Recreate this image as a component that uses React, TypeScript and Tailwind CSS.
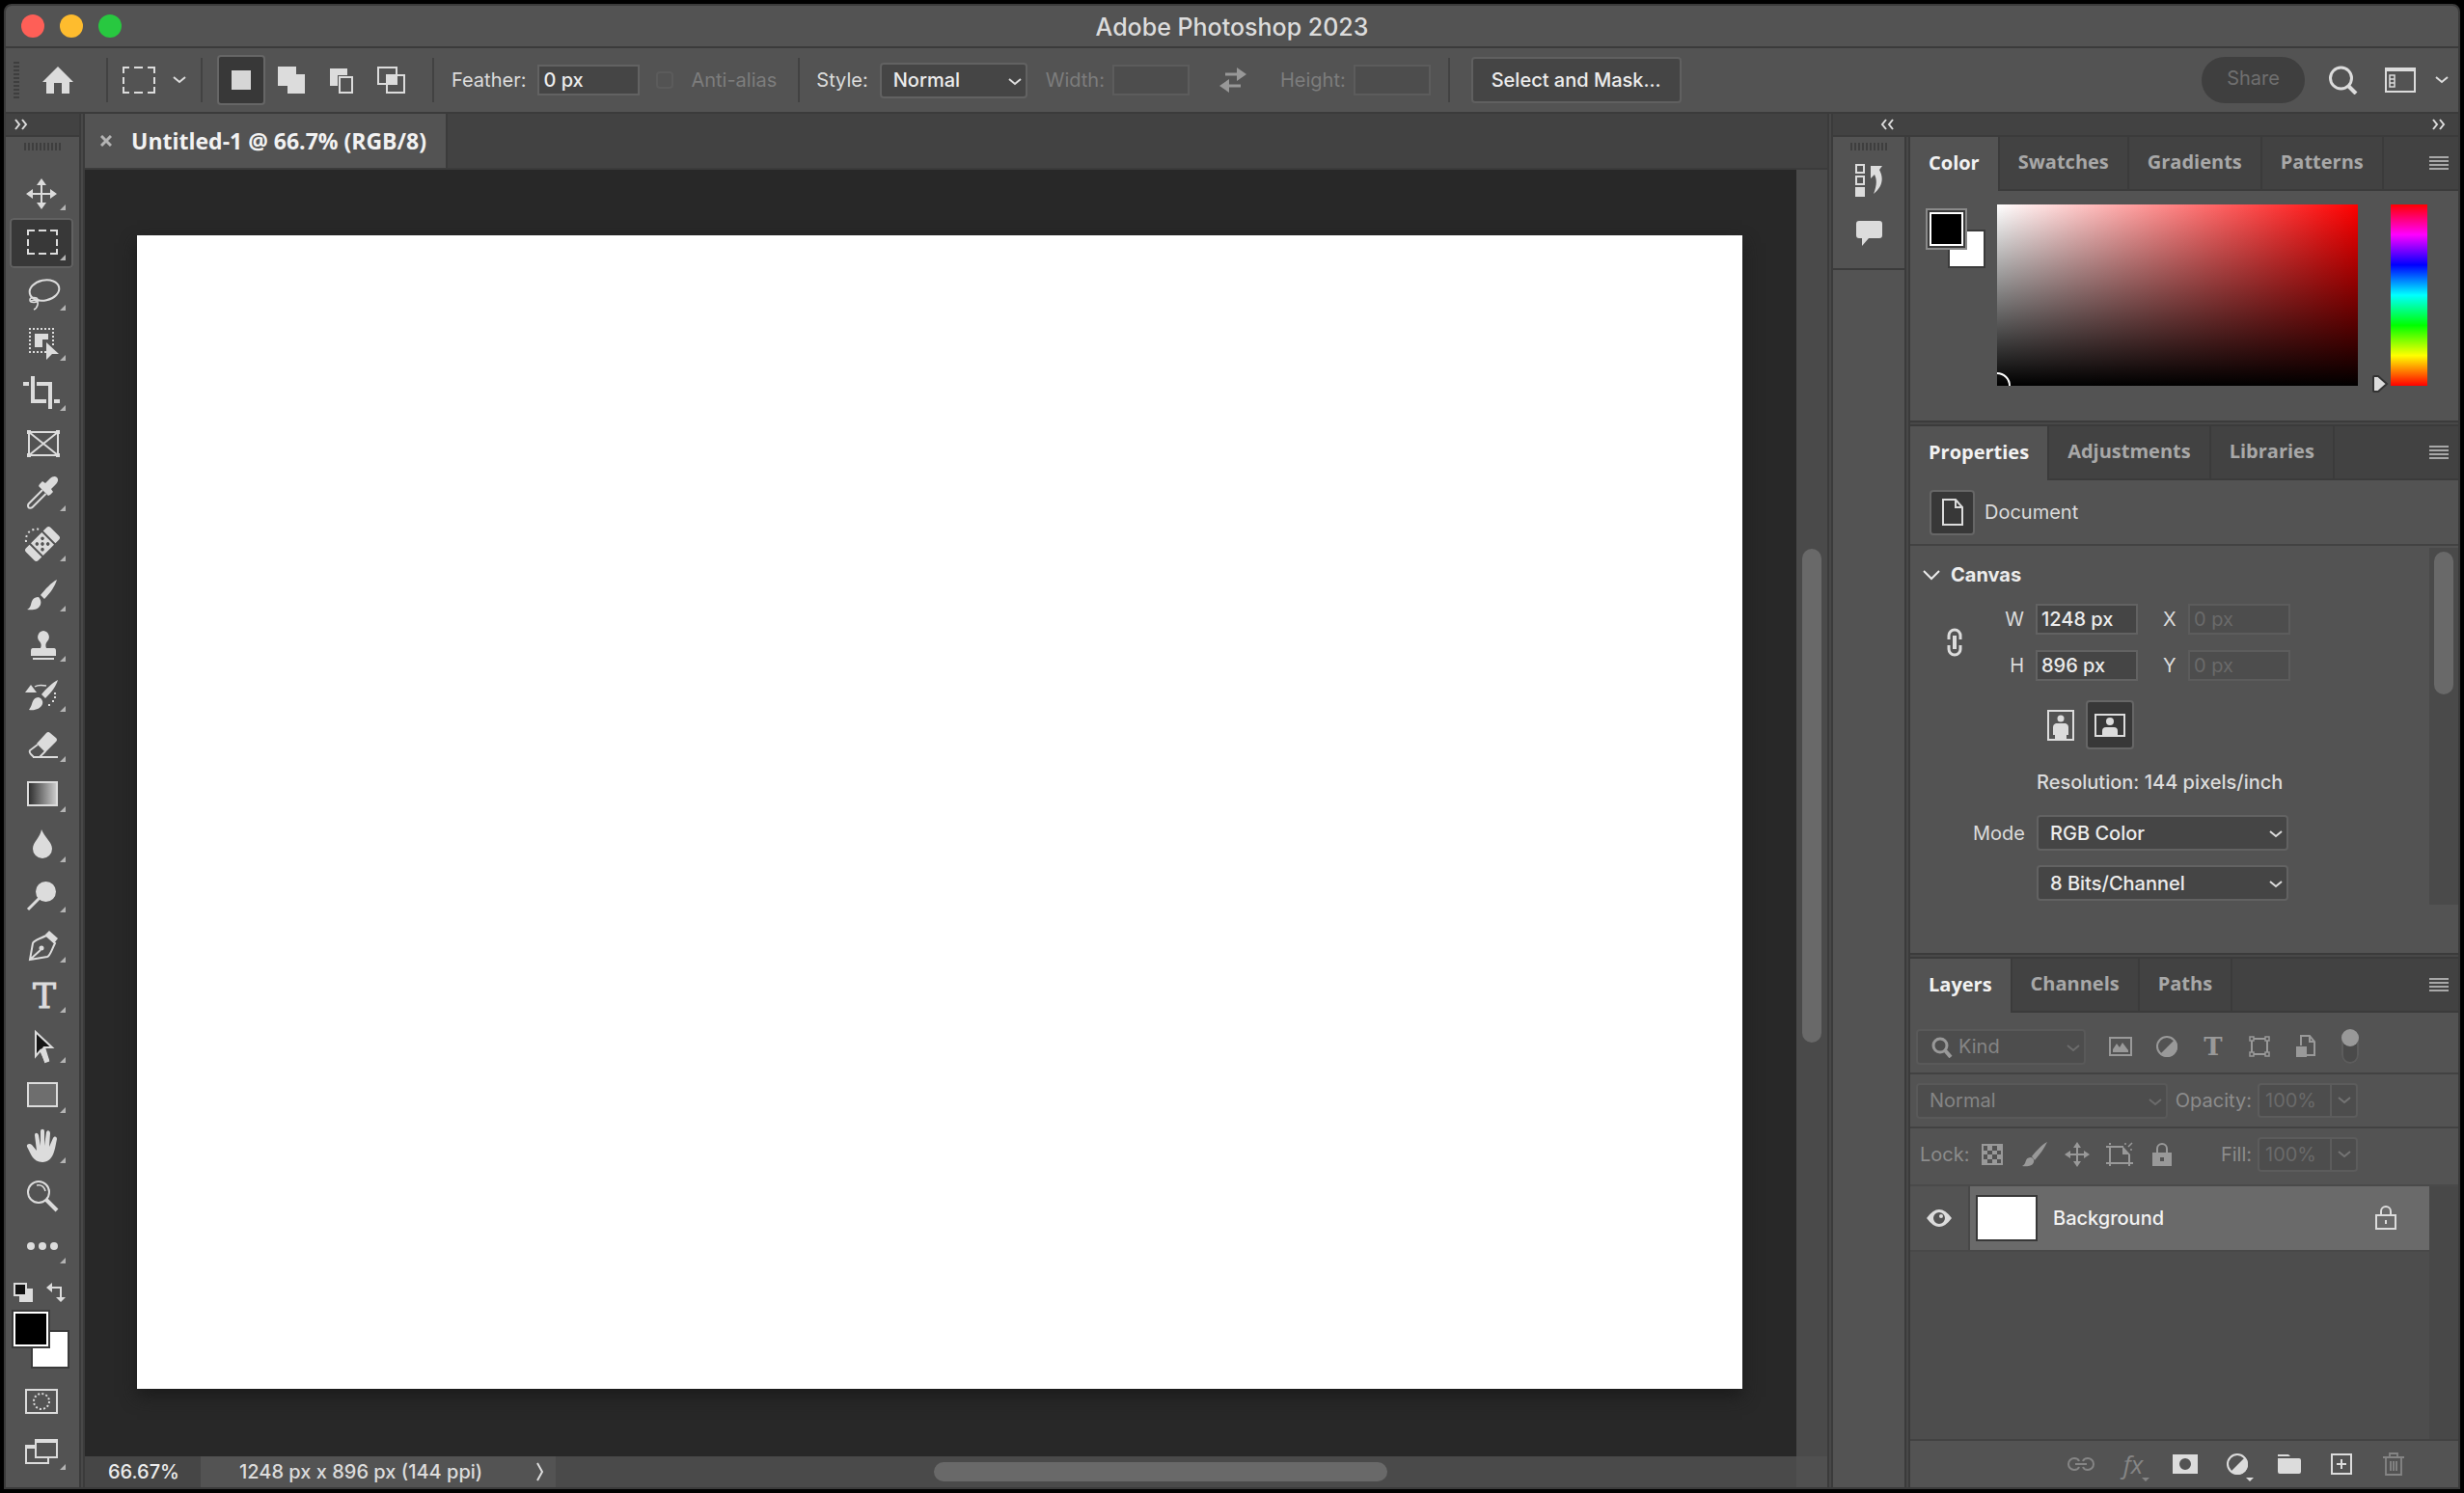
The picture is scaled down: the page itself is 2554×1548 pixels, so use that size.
import type { ReactNode } from "react";
import clsx from "clsx";

const Svg = ({ w, h, className, children }: { w: number; h: number; className?: string; children: ReactNode }) => (
  <svg
    width={w}
    height={h}
    viewBox={`0 0 ${w} ${h}`}
    fill="none"
    stroke="currentColor"
    strokeWidth={2}
    aria-hidden="true"
    className={clsx("shrink-0", className)}
  >
    {children}
  </svg>
);

const Chevron = ({ className }: { className?: string }) => (
  <Svg w={14} h={8} className={className}>
    <path d="M1 1l6 5 6-5" />
  </Svg>
);

const Chevrons = ({ flip }: { flip?: boolean }) => (
  <Svg w={16} h={12} className={clsx("text-[#dcdcdc]", flip && "rotate-180")}>
    <path d="M2 1l4 5-4 5M9 1l4 5-4 5" />
  </Svg>
);

// each tool is drawn on a 66x52 cell
const tools: { name: string; plain?: boolean; art: ReactNode }[] = [
  {
    name: "Move",
    art: (
      <>
        <path d="M33 15v24M21 27h24" />
        <path d="M33 11l5 7H28zM33 43l5-7H28zM17 27l7-5v10zM49 27l-7-5v10z" fill="currentColor" stroke="none" />
      </>
    ),
  },
  {
    name: "Rectangular Marquee",
    art: <path d="M19 18v-5h7M30 13h8M42 13h7v5M49 22v7M49 32v5h-7M38 37h-8M26 37h-7v-5M19 29v-7" />,
  },
  {
    name: "Lasso",
    art: (
      <>
        <ellipse cx="36" cy="23" rx="15.5" ry="10.5" transform="rotate(-12 36 23)" />
        <ellipse cx="25" cy="33" rx="4" ry="2.5" strokeWidth="1.6" />
        <path d="M22 34c5-2 8 0 7 4-.5 2-1 4-4 5M28 34l3-1" strokeWidth="1.6" />
      </>
    ),
  },
  {
    name: "Object Selection",
    art: (
      <>
        <path d="M20 11h27M21 14v23M24 35h14M45 14v14" strokeDasharray="2 2" />
        <path d="M26 16h14v6h-6v8h-8z" fill="currentColor" stroke="none" />
        <path d="M38 25l13 12h-7l-6 6z" fill="currentColor" stroke="none" />
      </>
    ),
  },
  {
    name: "Crop",
    art: <path d="M14 16h6M24 8v26h14M28 16h14v26M46 34h6" strokeWidth="4" />,
  },
  {
    name: "Frame",
    plain: true,
    art: (
      <>
        <path d="M20 14h30v24H20zM20 14l30 24M50 14L20 38" />
        <path d="M18 12h4v4h-4zM48 12h4v4h-4zM18 36h4v4h-4zM48 36h4v4h-4z" fill="currentColor" stroke="none" />
      </>
    ),
  },
  {
    name: "Eyedropper",
    art: (
      <>
        <path d="M34 22L20 36c-1 1-1 3-.5 4s3 1 4 0l14-14" />
        <path
          d="M31 16l3-3 3 2 5-5c2-2 5-3 7-1s1 5-1 7l-5 5 2 3-3 3-2 1-10-10z"
          fill="currentColor"
          stroke="none"
        />
      </>
    ),
  },
  {
    name: "Spot Healing",
    art: (
      <>
        <path d="M17 24c-1-9 5-15 15-13" strokeDasharray="2 3" />
        <g transform="rotate(-45 34 26)" fill="currentColor" stroke="none">
          <path d="M24 17v18h-5q-3 0-3-3V20q0-3 3-3zM44 17v18h5q3 0 3-3V20q0-3-3-3zM26 17h16v18H26z" />
          <g fill="#535353">
            <circle cx="30" cy="22" r="1.8" />
            <circle cx="38" cy="22" r="1.8" />
            <circle cx="34" cy="26" r="1.8" />
            <circle cx="30" cy="30" r="1.8" />
            <circle cx="38" cy="30" r="1.8" />
          </g>
        </g>
      </>
    ),
  },
  {
    name: "Brush",
    art: (
      <path
        d="M49 11c-6 3-12 10-17 16l4 4c6-6 11-13 13-20zM30 29c-6 0-7 4-8 8-1 3-2 4-4 5 6 1 12 0 14-5 1-3 0-6-2-8z"
        fill="currentColor"
        stroke="none"
      />
    ),
  },
  {
    name: "Clone Stamp",
    art: (
      <>
        <path
          d="M35 12a6.5 6.5 0 0 1 4 11c-2 2-2 5-1 7h8q2 0 2 3v5H22v-5q0-3 2-3h8c1-2 1-5-1-7a6.5 6.5 0 0 1 4-11z"
          fill="currentColor"
          stroke="none"
        />
        <path d="M24 41h22" />
      </>
    ),
  },
  {
    name: "History Brush",
    art: (
      <>
        <path
          d="M50 11c-6 3-12 9-17 15l4 4c6-6 11-12 13-19zM30 29c-5 0-6 4-7 7-1 3-2 4-3 6 6 1 12-1 14-6 1-3-1-6-4-7zM16 24l6-8 6 8z"
          fill="currentColor"
          stroke="none"
        />
        <path d="M26 18c3-2 7-2 12-1" strokeWidth="1.5" />
        <path d="M46 25h2M46 29h2M44 33h2M40 37h2" />
      </>
    ),
  },
  {
    name: "Eraser",
    art: (
      <>
        <path d="M38 14q2-2 4 0l6 5q2 2 0 4L37 34 28 25z" fill="currentColor" stroke="none" />
        <path d="M29 26l-8 6q-1 2 1 4l3 3h6l6-6M24 39h26" strokeWidth="1.8" />
      </>
    ),
  },
  {
    name: "Gradient",
    art: (
      <>
        <defs>
          <linearGradient id="ramp">
            <stop offset="0" stopColor="#2b2b2b" />
            <stop offset="1" stopColor="#cfcfcf" />
          </linearGradient>
        </defs>
        <path d="M19 13h30v24H19z" fill="url(#ramp)" />
      </>
    ),
  },
  {
    name: "Blur",
    art: <path d="M33 10c3 8 11 13 11 20a10 10 0 0 1-20 0c0-7 8-12 9-20z" fill="currentColor" stroke="none" />,
  },
  {
    name: "Dodge",
    art: (
      <>
        <circle cx="37.5" cy="22.5" r="10.5" fill="currentColor" stroke="none" />
        <path d="M31 29L19 41" strokeWidth="3" />
      </>
    ),
  },
  {
    name: "Pen",
    art: (
      <>
        <path d="M21 41l3-17c1-3 6-4 14-8l9 8c-4 8-5 13-8 14zM21 41l11-10" />
        <circle cx="33" cy="29" r="2.5" fill="currentColor" stroke="none" />
        <path d="M37 15l4-4 9 8-4 5z" fill="currentColor" stroke="none" />
      </>
    ),
  },
  {
    name: "Type",
    art: (
      <text
        x="36"
        y="39"
        textAnchor="middle"
        fill="currentColor"
        strokeWidth="1"
        className="font-['DejaVu_Serif'] text-[36px]"
      >
        T
      </text>
    ),
  },
  {
    name: "Path Selection",
    art: (
      <>
        <path d="M27 12l17 16h-8l4 13-3 1-5-11-5 6z" fill="#151515" />
        <path d="M33 31l2-2 5 13-3 1z" fill="currentColor" />
      </>
    ),
  },
  { name: "Rectangle", art: <path d="M19 13h30v24H19z" fill="#6e6e6e" /> },
  {
    name: "Hand",
    art: (
      <path
        d="M18 27c-1-3 3-4 5-2l5 6-2-16c0-3 3-3 4 0l2 11V11c0-3 4-3 4 0v15l2-14c1-3 4-2 4 1l-1 14 4-9c2-3 4-1 4 1-2 9-3 24-15 24-10 0-12-9-16-16z"
        fill="currentColor"
        stroke="none"
      />
    ),
  },
  {
    name: "Zoom",
    plain: true,
    art: (
      <>
        <circle cx="30" cy="22" r="11" />
        <path d="M28 15c5-1 8 2 9 6" strokeWidth="1.5" />
        <path d="M38 30l11 11" strokeWidth="4" />
      </>
    ),
  },
  {
    name: "Edit Toolbar",
    art: (
      <g fill="currentColor" stroke="none">
        <circle cx="22" cy="26" r="4" />
        <circle cx="34" cy="26" r="4" />
        <circle cx="46" cy="26" r="4" />
      </g>
    ),
  },
];

const Corner = () => <path d="M58 38v6h-6z" fill="#b4b4b4" stroke="none" />;

const Gutter = () => <div className="w-[6px] shrink-0 border-x-2 border-[#3b3b3b] bg-[#484848]" />;

const Rule = () => <div className="h-[46px] w-0.5 shrink-0 bg-[#424242]" />;

function Dropdown({
  id,
  value,
  label,
  disabled,
  className,
}: {
  id?: string;
  value: string;
  label?: string;
  disabled?: boolean;
  className: string;
}) {
  return (
    <div className={clsx("relative h-[37px] shrink-0", className)}>
      <select
        id={id}
        aria-label={label}
        disabled={disabled}
        className={clsx(
          "block h-full w-full appearance-none rounded border-2 px-3 opacity-100 outline-none",
          disabled
            ? "border-[#595959] bg-[#4d4d4d] text-[#858585]"
            : "border-[#626262] bg-[#454545] font-medium text-[#ececec]"
        )}
      >
        <option>{value}</option>
      </select>
      <Chevron
        className={clsx(
          "pointer-events-none absolute top-4 right-1.5",
          disabled ? "text-[#6c6c6c]" : "text-[#dcdcdc]"
        )}
      />
    </div>
  );
}

function Field({
  id,
  value = "",
  disabled,
  className,
}: {
  id: string;
  value?: string;
  disabled?: boolean;
  className: string;
}) {
  return (
    <input
      id={id}
      type="text"
      defaultValue={value}
      disabled={disabled}
      className={clsx(
        "h-8 shrink-0 border-2 px-1 outline-none",
        disabled
          ? "border-[#5c5c5c] bg-[#4d4d4d] text-[#6a6a6a]"
          : "border-[#626262] bg-[#454545] font-medium text-[#ececec]",
        className
      )}
    />
  );
}

function PercentField({ id }: { id: string }) {
  return (
    <div className="flex h-9 w-[104px] shrink-0 rounded border-2 border-[#5c5c5c] bg-[#4d4d4d]">
      <input id={id} type="text" disabled defaultValue="100%" className="w-[73px] px-1.5 text-[#6a6a6a] outline-none" />
      <button disabled aria-label="Open slider" className="grid flex-1 place-items-center border-l-2 border-[#5c5c5c] text-[#747474]">
        <Chevron />
      </button>
    </div>
  );
}

function PanelTabs({ names }: { names: string[] }) {
  return (
    <div className="flex h-14 shrink-0 font-['Open_Sans',sans-serif] font-bold">
      {names.map((name, i) => (
        <button
          key={name}
          className={clsx(
            "border-r-2 border-[#3b3b3b] px-[19px] pb-0.5",
            i === 0 ? "text-[#f2f2f2]" : "border-b-2 bg-[#424242] text-[#a8a8a8]"
          )}
        >
          {name}
        </button>
      ))}
      <div className="flex flex-1 items-center justify-end border-b-2 border-[#3b3b3b] bg-[#424242] pr-[10px]">
        <button aria-label={`${names[0]} panel menu`} className="text-[#a8a8a8]">
          <Svg w={20} h={14}>
            <path d="M0 1h20M0 5h20M0 9h20M0 13h20" />
          </Svg>
        </button>
      </div>
    </div>
  );
}

const PanelGap = () => <div className="h-[6px] shrink-0 border-y-2 border-[#3b3b3b] bg-[#484848]" />;

const combineModes = [
  {
    name: "Add to selection",
    art: <path d="M1 0h19v8h9v20H11v-8H1z" fill="currentColor" stroke="none" />,
  },
  {
    name: "Subtract from selection",
    art: (
      <>
        <path d="M3 2h18v7H11v11H3z" fill="currentColor" stroke="none" />
        <path d="M13 11h13v16H13z" />
      </>
    ),
  },
  {
    name: "Intersect with selection",
    art: (
      <>
        <path d="M1 1h19v17H1zM10 9h18v18H10z" />
        <path d="M11 10h8v8h-8z" fill="currentColor" />
      </>
    ),
  },
];

function OptionsBar() {
  return (
    <div className="flex h-[68px] shrink-0 items-center border-b-2 border-[#3b3b3b] pl-2">
      <Svg w={6} h={38} className="text-[#3e3e3e]">
        <path d="M3 0v38" strokeWidth="6" strokeDasharray="2 2" />
      </Svg>
      <button aria-label="Home" className="ml-6">
        <Svg w={32} h={30}>
          <path d="M16 1l16 16h-4v12h-8V18h-8v11H4V17H0z" fill="currentColor" stroke="none" />
        </Svg>
      </button>
      <div className="ml-[34px]">
        <Rule />
      </div>
      <button aria-label="Tool presets" className="ml-[15px] flex items-center gap-[18px]">
        <Svg w={34} h={28}>
          <path d="M1 7V1h6M12 1h9M26 1h7v6M33 11v7M33 21v6h-7M21 27h-9M7 27H1v-6M1 18v-7" />
        </Svg>
        <Chevron />
      </button>
      <div className="ml-[15px]">
        <Rule />
      </div>
      <button
        aria-label="New selection"
        className="ml-[15px] grid h-[52px] w-[50px] place-items-center rounded border-2 border-[#666] bg-[#383838]"
      >
        <span className="size-5 bg-[#d6d6d6]" />
      </button>
      {combineModes.map((m) => (
        <button key={m.name} aria-label={m.name} className="grid h-[52px] w-[52px] place-items-center">
          <Svg w={29} h={28}>{m.art}</Svg>
        </button>
      ))}
      <div className="ml-[17px]">
        <Rule />
      </div>
      <label htmlFor="feather" className="ml-[18px]">
        Feather:
      </label>
      <Field id="feather" value="0 px" className="ml-3 w-[106px]" />
      <label className="ml-[17px] flex items-center gap-[18px] text-[#7d7d7d]">
        <input type="checkbox" disabled className="size-[18px] appearance-none rounded-sm border-2 border-[#5b5b5b]" />
        Anti-alias
      </label>
      <div className="ml-[22px]">
        <Rule />
      </div>
      <label htmlFor="style" className="ml-[17px]">
        Style:
      </label>
      <Dropdown id="style" value="Normal" className="ml-[12px] w-[153px]" />
      <label htmlFor="width" className="ml-[19px] text-[#7d7d7d]">
        Width:
      </label>
      <Field id="width" disabled className="ml-2 w-20" />
      <button aria-label="Swap width and height" className="ml-[31px] text-[#989898]">
        <Svg w={28} h={28}>
          <path d="M6 8h14M8 20h14" strokeWidth="3" />
          <path d="M18 1l10 7-10 7zM10 13L0 20l10 7z" fill="currentColor" stroke="none" />
        </Svg>
      </button>
      <label htmlFor="height" className="ml-[35px] text-[#7d7d7d]">
        Height:
      </label>
      <Field id="height" disabled className="ml-2 w-20" />
      <div className="ml-[18px]">
        <Rule />
      </div>
      <button className="ml-[22px] h-12 w-[218px] rounded border-2 border-[#606060] bg-[#454545] font-medium text-[#ececec]">
        Select and Mask...
      </button>
      <button disabled className="ml-auto h-12 w-[107px] rounded-full bg-[#3f3f3f] pb-1 text-[#6f6f6f]">
        Share
      </button>
      <button aria-label="Search" className="ml-[25px]">
        <Svg w={30} h={30}>
          <circle cx="12.5" cy="13" r="11" strokeWidth="3" />
          <path d="M20 21l8 8" strokeWidth="4" />
        </Svg>
      </button>
      <button aria-label="Workspace" className="mr-[10px] ml-[28px] flex items-center gap-5">
        <Svg w={32} h={28}>
          <path d="M1 2h30v24H1z" />
          <path d="M0 3h32" strokeWidth="4" />
          <path d="M5 9h5v12H5zM5 13h5M5 17h5" strokeWidth="1.5" />
        </Svg>
        <Chevron />
      </button>
    </div>
  );
}

function Toolbar() {
  return (
    <div className="flex w-[76px] shrink-0 flex-col">
      <div className="flex h-6 shrink-0 items-center border-b-2 border-[#3b3b3b] bg-[#424242] pl-2">
        <Chevrons />
      </div>
      <Grip />
      <div className="flex flex-col items-start pl-1">
        {tools.map((t) => (
          <button
            key={t.name}
            aria-label={t.name}
            className={clsx(
              "h-[52px] w-[66px] rounded",
              t.name === "Rectangular Marquee" && "bg-[#383838] ring-2 ring-[#616161] ring-inset"
            )}
          >
            <Svg w={66} h={52}>
              {t.art}
              {!t.plain && <Corner />}
            </Svg>
          </button>
        ))}
      </div>
      <div className="mt-3 flex gap-[14px] pl-2">
        <button aria-label="Default colors">
          <Svg w={20} h={20}>
            <path d="M6 6h14v14H6z" fill="currentColor" stroke="none" />
            <path d="M1 1h12v12H1z" fill="#111" />
          </Svg>
        </button>
        <button aria-label="Switch colors">
          <Svg w={20} h={20}>
            <path d="M4 5h11v11" />
            <path d="M0 5l6-5v10zM15 20l5-5H10z" fill="currentColor" stroke="none" />
          </Svg>
        </button>
      </div>
      <button aria-label="Foreground and background colors" className="mt-2 ml-1.5">
        <Svg w={62} h={62}>
          <path d="M21 22h38v38H21z" fill="#fff" stroke="#3b3b3b" />
          <path d="M1 1h38v38H1z" fill="#000" stroke="#3b3b3b" />
          <path d="M3 3h34v34H3z" stroke="#fff" />
        </Svg>
      </button>
      <div className="mt-2 flex flex-col items-start pl-1">
        <button aria-label="Quick mask mode">
          <Svg w={66} h={52}>
            <path d="M17 13h32v24H17z" />
            <circle cx="33" cy="25" r="8" strokeDasharray="2 2.2" />
          </Svg>
        </button>
        <button aria-label="Screen mode">
          <Svg w={66} h={52}>
            <path d="M25 20h-8v17h23v-6" />
            <path d="M16 20h10" strokeWidth="4" />
            <path d="M27 14h22v17H27z" />
            <path d="M26 14h24" strokeWidth="4" />
            <Corner />
          </Svg>
        </button>
      </div>
    </div>
  );
}

const Grip = () => (
  <div className="flex h-8 shrink-0 justify-center pt-1.5">
    <Svg w={38} h={8} className="text-[#3e3e3e]">
      <path d="M0 4h38" strokeWidth="8" strokeDasharray="2 2" />
    </Svg>
  </div>
);

function DocumentArea() {
  return (
    <main className="flex min-w-0 flex-1 flex-col">
      <div className="flex h-[58px] shrink-0 border-b-2 border-[#3b3b3b] bg-[#424242]">
        <div className="flex items-center border-r-2 border-[#3b3b3b] bg-[#535353] pr-5 pl-4">
          <button aria-label="Close document">
            <Svg w={12} h={12} className="text-[#b4b4b4]">
              <path d="M1 1l10 10M11 1L1 11" strokeWidth="3" />
            </Svg>
          </button>
          <span className="ml-5 font-['Open_Sans',sans-serif] text-[23px] font-bold text-[#f2f2f2]">Untitled-1 @ 66.7% (RGB/8)</span>
        </div>
      </div>
      <div className="flex flex-1">
        <div className="flex flex-1 bg-[#282828] pt-[68px] pr-14 pb-[70px] pl-[54px]">
          <div className="flex-1 bg-white shadow-[0_8px_16px_#1c1c1c]" />
        </div>
        <div className="flex w-8 flex-col items-center bg-[#4a4a4a]">
          <div className="basis-[393px]" />
          <div className="w-5 shrink-0 basis-[512px] rounded-full bg-[#696969]" />
        </div>
      </div>
      <div className="flex h-8 shrink-0 bg-[#4a4a4a]">
        <div className="flex w-[120px] items-center bg-[#464646] pl-6 font-medium text-[#ececec]">66.67%</div>
        <div className="flex w-[368px] items-center justify-between bg-[#535353] pr-3 pl-10 font-medium">
          1248 px x 896 px (144 ppi)
          <button aria-label="Status options">
            <Svg w={8} h={20}>
              <path d="M1 1l5 9-5 9" />
            </Svg>
          </button>
        </div>
        <div className="flex flex-1 items-center">
          <div className="ml-[392px] h-5 w-[470px] rounded-full bg-[#696969]" />
        </div>
        <div className="w-8 bg-[#505050]" />
      </div>
    </main>
  );
}

function ColorPanel() {
  return (
    <section>
      <PanelTabs names={["Color", "Swatches", "Gradients", "Patterns"]} />
      <div className="flex h-[238px] pt-[14px] pr-8 pl-4">
        <button aria-label="Set colors" className="mt-1 self-start">
          <Svg w={62} h={62}>
            <path d="M24 23h37v38H24z" fill="#fff" stroke="#3b3b3b" />
            <path d="M1 1h41v41H1z" fill="#3b3b3b" stroke="#8a8a8a" />
            <path d="M5 5h33v33H5z" fill="#000" stroke="#fff" />
          </Svg>
        </button>
        <div className="ml-3 h-[188px] flex-1 overflow-hidden bg-[linear-gradient(to_top,#000,transparent),linear-gradient(to_right,#fff,#f00)]">
          <svg viewBox="0 0 374 188" preserveAspectRatio="xMinYMax meet" className="h-full w-full" aria-hidden="true">
            <circle cx="0" cy="188" r="13" fill="none" stroke="#fff" strokeWidth="2" />
          </svg>
        </div>
        <div className="relative ml-[34px] h-[188px] w-[38px]">
          <input
            type="range"
            min={0}
            max={360}
            defaultValue={0}
            aria-label="Hue"
            className="block h-full w-full appearance-none bg-[linear-gradient(#f00,#f0f,#00f,#0ff,#0f0,#ff0,#f00)] [writing-mode:vertical-lr] [&::-webkit-slider-thumb]:opacity-0"
          />
          <Svg w={18} h={20} className="pointer-events-none absolute -bottom-2 -left-5">
            <path d="M3 2h4l9 8-9 8H3q-1 0-1-1V3q0-1 1-1z" fill="#dcdcdc" stroke="#333" />
          </Svg>
        </div>
      </div>
    </section>
  );
}

function PropertiesPanel() {
  return (
    <section>
      <PanelTabs names={["Properties", "Adjustments", "Libraries"]} />
      <div className="flex h-[68px] items-center gap-[10px] border-b-2 border-[#424242] pl-5">
        <span className="grid size-[47px] place-items-center rounded border-2 border-[#666] bg-[#383838]">
          <Svg w={22} h={28}>
            <path d="M1 1h13l7 8v18H1zM14 1v8h7" />
          </Svg>
        </span>
        Document
      </div>
      <div className="flex h-[422px]">
        <div className="flex-1 pl-[13px]">
          <button className="mt-4 flex h-7 items-center gap-[11px] font-bold text-[#ececec]">
            <Svg w={18} h={11}>
              <path d="M1 1l8 8 8-8" />
            </Svg>
            Canvas
          </button>
          <div className="mt-4 flex items-center">
            <button aria-label="Link dimensions" className="ml-[25px]">
              <Svg w={16} h={30}>
                <path d="M2 12V8a6 6 0 0 1 12 0v4M2 18v4a6 6 0 0 0 12 0v-4" strokeWidth="3" />
                <path d="M8 8v14" strokeWidth="4" />
              </Svg>
            </button>
            <div className="ml-10 grid grid-cols-[36px_106px_52px_106px] items-center gap-y-4">
              <label htmlFor="canvas-w" className="pr-3 text-right">
                W
              </label>
              <Field id="canvas-w" value="1248 px" className="w-full" />
              <label htmlFor="canvas-x" className="pl-[26px]">
                X
              </label>
              <Field id="canvas-x" value="0 px" disabled className="w-full" />
              <label htmlFor="canvas-h" className="pr-3 text-right">
                H
              </label>
              <Field id="canvas-h" value="896 px" className="w-full" />
              <label htmlFor="canvas-y" className="pl-[26px]">
                Y
              </label>
              <Field id="canvas-y" value="0 px" disabled className="w-full" />
            </div>
          </div>
          <div className="mt-5 flex items-center gap-3 pl-[129px]">
            <button aria-label="Portrait">
              <Svg w={28} h={32}>
                <path d="M1 1h26v30H1z" />
                <circle cx="14" cy="9" r="3.5" fill="currentColor" stroke="none" />
                <path d="M9 14h10q3 1 3 4v8h-2v4H8v-4H6v-8q0-3 3-4z" fill="currentColor" stroke="none" />
              </Svg>
            </button>
            <button
              aria-label="Landscape"
              className="grid h-[51px] w-[50px] place-items-center rounded border-2 border-[#666] bg-[#383838]"
            >
              <Svg w={32} h={24}>
                <path d="M1 1h30v22H1z" />
                <circle cx="16" cy="8" r="4" fill="currentColor" stroke="none" />
                <path d="M8 22v-4q0-4 4-4h8q4 0 4 4v4z" fill="currentColor" stroke="none" />
              </Svg>
            </button>
          </div>
          <div className="mt-5 pl-[118px] leading-7 font-medium">Resolution: 144 pixels/inch</div>
          <div className="mt-5 grid grid-cols-[106px_261px] items-center gap-x-3 gap-y-[15px]">
            <label htmlFor="mode" className="text-right">
              Mode
            </label>
            <Dropdown id="mode" value="RGB Color" className="w-full" />
            <Dropdown label="Bit depth" value="8 Bits/Channel" className="col-start-2 w-full" />
          </div>
        </div>
        <div className="mt-0.5 h-[370px] w-[30px] bg-[#4a4a4a] px-[5px] pt-1">
          <div className="h-[148px] rounded-full bg-[#696969]" />
        </div>
      </div>
    </section>
  );
}

const HalfCircle = () => (
  <Svg w={22} h={22}>
    <circle cx="11" cy="11" r="10" />
    <path d="M19 4A10.500 10.500 0 0 1 4 19z" fill="currentColor" stroke="none" />
  </Svg>
);

const filters = [
  {
    name: "Filter pixel layers",
    art: (
      <Svg w={24} h={20}>
        <path d="M1 1h22v18H1z" />
        <path d="M4 16v-3l4-6 3 4 3-5 6 8v2z" fill="currentColor" stroke="none" />
      </Svg>
    ),
  },
  { name: "Filter adjustment layers", art: <HalfCircle /> },
  {
    name: "Filter type layers",
    art: <span className="font-['DejaVu_Serif'] text-[26px] font-bold">T</span>,
  },
  {
    name: "Filter shape layers",
    art: (
      <Svg w={22} h={22}>
        <path d="M3 5v12M19 5v12M5 3h12M5 19h12" />
        <path d="M1 1h4v4H1zM17 1h4v4h-4zM1 17h4v4H1zM17 17h4v4h-4z" strokeWidth="1.5" />
      </Svg>
    ),
  },
  {
    name: "Filter smart objects",
    art: (
      <Svg w={22} h={26}>
        <path d="M6 12V2h9l5 6v14h-8M15 2v6h5" />
        <path d="M1 13h11v11H1z" fill="currentColor" stroke="none" />
      </Svg>
    ),
  },
];

const locks = [
  {
    name: "Lock transparent pixels",
    art: (
      <Svg w={22} h={22}>
        <path d="M1 1h20v20H1z" />
        <path d="M6 2h5v5H6zM16 2h5v5h-5zM1 7h5v4H1zM11 7h5v4h-5zM6 11h5v5H6zM16 11h5v5h-5zM1 16h5v4H1zM11 16h5v4h-5z" fill="currentColor" stroke="none" />
      </Svg>
    ),
  },
  {
    name: "Lock image pixels",
    art: (
      <Svg w={26} h={26}>
        <path d="M26 0C20 3 15 9 10 15l3 4C18 13 23 7 26 0zM9 16c-5 0-5 4-6 6-1 2-2 2-3 3 5 1 11 0 12-4 1-2-1-5-3-5z" fill="currentColor" stroke="none" />
      </Svg>
    ),
  },
  {
    name: "Lock position",
    art: (
      <Svg w={26} h={26}>
        <path d="M13 3v20M3 13h20" />
        <path d="M13 0l4 6H9zM13 26l4-6H9zM0 13l6-4v8zM26 13l-6-4v8z" fill="currentColor" stroke="none" />
      </Svg>
    ),
  },
  {
    name: "Lock artboard nesting",
    art: (
      <Svg w={28} h={28}>
        <path d="M0 6h18M4 2v2M4 6v20M0 23h28M24 14v12" />
        <path d="M17 5l8 9h-8z" fill="currentColor" stroke="none" />
        <path d="M23 6l4-4M25 9h2M20 4V2" strokeWidth="1.500" />
      </Svg>
    ),
  },
  {
    name: "Lock all",
    art: (
      <Svg w={20} h={24}>
        <path d="M5 11V6a5 5 0 0 1 10 0v5" />
        <path d="M0 10h20v14H0zM8 15v4h4v-4z" fill="currentColor" fillRule="evenodd" stroke="none" />
      </Svg>
    ),
  },
];

const layerActions = [
  {
    name: "Link layers",
    off: true,
    art: (
      <Svg w={28} h={16}>
        <path d="M12 5q-1-3-5-3a6 6 0 0 0 0 12q4 0 5-3M16 5q1-3 5-3a6 6 0 0 1 0 12q-4 0-5-3M8 8h12" />
      </Svg>
    ),
  },
  {
    name: "Add a layer style",
    off: true,
    menu: true,
    art: <span className="font-['Open_Sans'] text-[26px] leading-none italic">fx</span>,
  },
  {
    name: "Add layer mask",
    art: (
      <Svg w={26} h={20}>
        <path d="M0 0h26v20H0zM13 4a6 6 0 0 0 0 12 6 6 0 0 0 0-12z" fill="currentColor" fillRule="evenodd" stroke="none" />
      </Svg>
    ),
  },
  { name: "New adjustment layer", menu: true, art: <HalfCircle /> },
  {
    name: "New group",
    art: (
      <Svg w={24} h={20}>
        <path d="M0 0h11l2 2H0zM0 4h22q2 0 2 2v12q0 2-2 2H2q-2 0-2-2z" fill="currentColor" stroke="none" />
      </Svg>
    ),
  },
  {
    name: "New layer",
    art: (
      <Svg w={22} h={22}>
        <path d="M1 1h20v20H1zM6 11h10M11 6v10" />
      </Svg>
    ),
  },
  {
    name: "Delete layer",
    off: true,
    art: (
      <Svg w={22} h={24}>
        <path d="M0 5h22M7 5V1h8v4M3 5v18h16V5M8 9v10M11 9v10M14 9v10" strokeWidth="1.8" />
      </Svg>
    ),
  },
];

function LayersPanel() {
  return (
    <section className="flex flex-1 flex-col">
      <PanelTabs names={["Layers", "Channels", "Paths"]} />
      <div className="flex h-16 shrink-0 items-center border-b-2 border-[#424242] pt-2 pl-1.5 text-[#999]">
        <div className="relative">
          <Dropdown label="Filter kind" value="Kind" disabled className="w-[176px] [&>select]:pl-[42px]" />
          <Svg w={22} h={22} className="pointer-events-none absolute top-2 left-4">
            <circle cx="9" cy="9" r="7" strokeWidth="3" />
            <path d="M14 14l6 7" strokeWidth="4" />
          </Svg>
        </div>
        <div className="ml-3 flex">
          {filters.map((f) => (
            <button key={f.name} aria-label={f.name} className="grid h-9 w-12 place-items-center">
              {f.art}
            </button>
          ))}
        </div>
        <button
          role="switch"
          aria-checked="true"
          aria-label="Layer filtering"
          className="ml-[13px] flex h-9 w-[18px] items-start rounded-full bg-[#4a4a4a] ring-2 ring-[#5c5c5c] ring-inset"
        >
          <span className="size-[18px] rounded-full bg-[#999]" />
        </button>
      </div>
      <div className="flex h-14 shrink-0 items-center border-b-2 border-[#424242] pr-[104px] pl-1.5 text-[#8c8c8c]">
        <Dropdown label="Blend mode" value="Normal" disabled className="w-[261px]" />
        <label htmlFor="opacity" className="mr-1.5 ml-auto">
          Opacity:
        </label>
        <PercentField id="opacity" />
      </div>
      <div className="flex h-[60px] shrink-0 items-center border-b-2 border-[#4a4a4a] pr-[104px] pb-1 pl-[10px] text-[#8c8c8c]">
        <span className="w-[53px]">Lock:</span>
        <div className="flex text-[#999]">
          {locks.map((l) => (
            <button key={l.name} aria-label={l.name} className="grid h-9 w-11 place-items-center">
              {l.art}
            </button>
          ))}
        </div>
        <label htmlFor="fill" className="mr-1.5 ml-auto">
          Fill:
        </label>
        <PercentField id="fill" />
      </div>
      <div className="flex flex-1">
        <div className="flex-1 bg-[#4d4d4d]">
          <div className="flex h-[68px] border-b-2 border-[#484848] bg-[#535353]">
            <button aria-label="Toggle visibility" className="grid w-[62px] place-items-center border-r-2 border-[#484848]">
              <Svg w={26} h={18}>
                <path d="M0 9q13-18 26 0-13 18-26 0zM13 3a6 6 0 0 0 0 12 6 6 0 0 0 0-12z" fill="currentColor" fillRule="evenodd" stroke="none" />
                <circle cx="15" cy="7" r="2" fill="currentColor" stroke="none" />
              </Svg>
            </button>
            <div className="flex flex-1 items-center bg-[#6a6a6a] pr-[34px] pl-1.5">
              <span className="h-12 w-16 border-2 border-[#383838] bg-white" />
              <span className="ml-4 font-medium text-[#f2f2f2]">Background</span>
              <button aria-label="Locked" className="ml-auto">
                <Svg w={22} h={26}>
                  <path d="M1 10h20v14H1zM6 10V6a5 5 0 0 1 10 0v4M11 15v4" />
                </Svg>
              </button>
            </div>
          </div>
        </div>
        <div className="w-[30px] bg-[#484848]" />
      </div>
      <div className="flex h-[50px] shrink-0 items-center justify-end border-t-2 border-[#424242] pr-[40px]">
        {layerActions.map((a) => (
          <button
            key={a.name}
            aria-label={a.name}
            disabled={a.off}
            className={clsx("relative grid h-9 w-[54px] place-items-center", a.off && "text-[#858585]")}
          >
            {a.art}
            {a.menu && (
              <Svg w={8} h={4} className="absolute right-2.5 bottom-0">
                <path d="M0 0h8L4 4z" fill="currentColor" stroke="none" />
              </Svg>
            )}
          </button>
        ))}
      </div>
    </section>
  );
}

export default function App() {
  return (
    <div className="h-screen bg-black p-1 font-['Inter',sans-serif] text-[20px] leading-6 text-[#dcdcdc]">
      <div className="flex h-full flex-col overflow-hidden rounded-t-lg border-2 border-[#3b3b3b] bg-[#535353]">
        <header className="relative flex h-11 shrink-0 items-center justify-center border-b-2 border-[#3b3b3b]">
          <div className="absolute left-4 flex gap-4">
            <button aria-label="Close" className="size-6 rounded-full bg-[#fe5f57]" />
            <button aria-label="Minimize" className="size-6 rounded-full bg-[#febc2e]" />
            <button aria-label="Zoom window" className="size-6 rounded-full bg-[#28c840]" />
          </div>
          <h1 className="pt-0.5 text-[25px] leading-8 font-medium">Adobe Photoshop 2023</h1>
        </header>
        <OptionsBar />
        <div className="flex min-h-0 flex-1">
          <Toolbar />
          <Gutter />
          <DocumentArea />
          <Gutter />
          <aside className="flex w-[648px] shrink-0 flex-col">
            <div className="flex h-6 shrink-0 items-center justify-between border-b-2 border-[#3b3b3b] bg-[#424242] pr-3 pl-12">
              <Chevrons flip />
              <Chevrons />
            </div>
            <div className="flex min-h-0 flex-1">
              <div className="w-[74px] shrink-0">
                <div className="flex h-[138px] flex-col items-center border-b-2 border-[#3b3b3b]">
                  <Grip />
                  <button aria-label="History" className="-mt-1">
                    <Svg w={28} h={34}>
                      <path d="M1 1h8v8H1zM1 13h8v8H1z" />
                      <path d="M0 24h10v10H0zM16 2h12l-3 4c5 9 3 18-6 25 3-8 4-14 1-20l-4 4z" fill="currentColor" stroke="none" />
                    </Svg>
                  </button>
                  <button aria-label="Comments" className="mt-6">
                    <Svg w={27} h={28}>
                      <path d="M3 1h21q3 0 3 3v12q0 3-3 3H13l-7 8v-8H3q-3 0-3-3V4q0-3 3-3z" fill="currentColor" stroke="none" />
                    </Svg>
                  </button>
                </div>
              </div>
              <Gutter />
              <div className="flex min-w-0 flex-1 flex-col">
                <ColorPanel />
                <PanelGap />
                <PropertiesPanel />
                <PanelGap />
                <LayersPanel />
              </div>
            </div>
          </aside>
        </div>
      </div>
    </div>
  );
}
